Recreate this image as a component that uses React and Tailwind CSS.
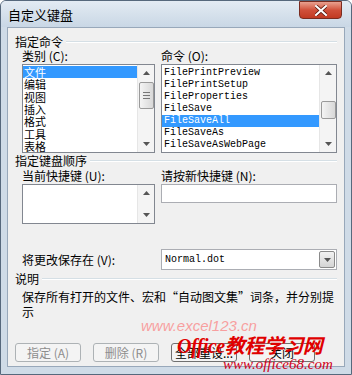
import React from "react";

const cjk = { fontFamily: '"Noto Sans CJK SC", "Noto Sans", sans-serif' };
const mono = { fontFamily: '"Liberation Mono", "Noto Sans CJK SC", monospace' };

function Arrow({ up }) {
  return (
    <svg width="7" height="4" viewBox="0 0 7 4">
      {up ? <path d="M0 4 L3.5 0 L7 4 Z" fill="#555" /> : <path d="M0 0 L3.5 4 L7 0 Z" fill="#555" />}
    </svg>
  );
}

function ScrollBar({ thumbTop, thumbH, showThumb = true }) {
  return (
    <div className="w-[17px] h-full bg-[#f4f4f4] border-l border-[#e6e6e6] flex flex-col items-center justify-between py-[6px] relative">
      <Arrow up />
      {showThumb && (
        <div
          className="absolute left-[1px] w-[15px] rounded-[2px] border border-[#9a9a9a] bg-gradient-to-r from-[#f4f4f4] to-[#d8d8d8] flex flex-col items-center justify-center gap-[2px]"
          style={{ top: thumbTop, height: thumbH }}
        >
          {thumbH < 25 ? null : (
            <>
              <div className="w-[7px] h-px bg-[#777]" />
              <div className="w-[7px] h-px bg-[#777]" />
              <div className="w-[7px] h-px bg-[#777]" />
            </>
          )}
        </div>
      )}
      <Arrow />
    </div>
  );
}

function GroupHeader({ text, mt }) {
  return (
    <div className={`flex items-center pl-[7px] pr-[7px] h-[12px] ${mt}`}>
      <span className="text-[12px] leading-[12px] text-black" style={cjk}>{text}</span>
      <div className="flex-1 ml-[3px] h-[2px] border-t border-[#d5dfe5] border-b border-b-white" />
    </div>
  );
}

export default function App() {
  const cats = ["文件", "编辑", "视图", "插入", "格式", "工具", "表格"];
  const cmds = ["FilePrintPreview", "FilePrintSetup", "FileProperties", "FileSave", "FileSaveAll", "FileSaveAs", "FileSaveAsWebPage"];
  return (
    <div className="w-[352px] h-[375px] relative overflow-hidden bg-[#cfdbe7] border border-[#56687c] rounded-t-[6px] flex flex-col" style={cjk}>
      {/* title bar */}
      <div className="h-[26px] flex items-center pl-[7px] pr-[10px] bg-gradient-to-b from-[#e3ebf3] to-[#c9d7e5] relative">
        <span className="text-[13px] text-black leading-none mt-[1px]">自定义键盘</span>
        <div className="absolute right-[9px] top-[0px] w-[43px] h-[18px] rounded-b-[4px] border border-[#7a2c20] bg-gradient-to-b from-[#e8a090] via-[#d0503a] to-[#c13a22] flex items-center justify-center">
          <svg width="12" height="11" viewBox="0 0 12 11">
            <path d="M1 1 L11 10 M11 1 L1 10" stroke="#5a1a10" strokeWidth="3.6" strokeLinecap="square" />
            <path d="M1 1 L11 10 M11 1 L1 10" stroke="#fff" strokeWidth="2" strokeLinecap="square" />
          </svg>
        </div>
      </div>
      {/* body */}
      <div className="flex-1 mx-[6px] mb-[7px] bg-[#f0f0f0] border border-[#98a8ba] flex flex-col">
        <GroupHeader text="指定命令" mt="mt-[8px]" />
        <div className="flex pl-[14px] pr-[6px] mt-[2px] gap-[6px]">
          <div className="w-[133px] flex flex-col">
            <div className="h-[12px] text-[12px] leading-[12px]">类别 (C):</div>
            <div className="mt-[2px] h-[89px] border border-[#828790] bg-white flex">
              <div className="flex-1 flex flex-col pt-[1px]">
                {cats.map((c, i) => (
                  <div key={c} className={`h-[12.3px] flex items-center text-[11px] leading-[12px] pl-[1px] ${i === 0 ? "bg-[#3399ff] text-white" : "text-black"}`}>{c}</div>
                ))}
              </div>
              <ScrollBar thumbTop={17} thumbH={27} />
            </div>
          </div>
          <div className="w-[176px] flex flex-col">
            <div className="h-[12px] text-[12px] leading-[12px]">命令 (O):</div>
            <div className="mt-[2px] h-[89px] border border-[#828790] bg-white flex">
              <div className="flex-1 flex flex-col pt-[2px]">
                {cmds.map((c, i) => (
                  <div key={c} className={`h-[12px] text-[10px] leading-[12px] pl-[2px] ${i === 4 ? "bg-[#3399ff] text-white" : "text-black"}`} style={mono}>{c}</div>
                ))}
              </div>
              <ScrollBar thumbTop={36} thumbH={18} />
            </div>
          </div>
        </div>
        <GroupHeader text="指定键盘顺序" mt="mt-[2px]" />
        <div className="flex pl-[14px] pr-[6px] mt-[3px] gap-[6px]">
          <div className="w-[133px] flex flex-col">
            <div className="h-[12px] text-[12px] leading-[12px]">当前快捷键 (U):</div>
            <div className="mt-[2px] h-[40px] border border-[#828790] bg-white flex justify-end">
              <ScrollBar showThumb={false} />
            </div>
          </div>
          <div className="w-[176px] flex flex-col">
            <div className="h-[12px] text-[12px] leading-[12px]">请按新快捷键 (N):</div>
            <div className="mt-[2px] h-[19px] border border-[#abadb3] bg-white" />
          </div>
        </div>
        <div className="flex items-center pl-[14px] pr-[6px] mt-[25px] gap-[6px]">
          <div className="w-[133px] text-[12px] leading-[12px]">将更改保存在 (V):</div>
          <div className="w-[176px] h-[21px] border border-[#abadb3] bg-white flex items-center">
            <span className="flex-1 pl-[3px] text-[10px]" style={mono}>Normal.dot</span>
            <div className="w-[16px] h-[17px] mr-[1px] border border-[#8a8a8a] rounded-[2px] bg-gradient-to-b from-[#f2f2f2] to-[#d4d4d4] flex items-center justify-center">
              <Arrow />
            </div>
          </div>
        </div>
        <GroupHeader text="说明" mt="mt-[3px]" />
        <div className="pl-[14px] pr-[8px] mt-[4px] text-[12px] leading-[15px] text-black">
          保存所有打开的文件、宏和“自动图文集”词条，并分别提<br />示
        </div>
        <div className="flex pl-[7px] mt-[24px] gap-[12px]">
          {["指定 (A)", "删除 (R)", "全部重设..."].map((b, i) => (
            <div key={b} className={`w-[66px] h-[19px] rounded-[3px] border ${i < 2 ? "border-[#adb2b5] text-[#8d8d8d]" : "border-[#707070] text-black"} bg-[#f4f4f4] text-[12px] leading-[17px] text-center`}>{b}</div>
          ))}
          <div className="w-[66px] h-[19px] rounded-[3px] border border-[#707070] bg-[#f4f4f4] text-[12px] leading-[17px] text-center">关闭</div>
        </div>
      </div>
      {/* watermark */}
      <div className="absolute left-[140px] top-[314px] text-[#ff5050] opacity-50 text-[15px] italic" style={{ fontFamily: '"Liberation Sans", sans-serif' }}>
        www.excel123.cn
      </div>
      <div className="absolute left-[176px] top-[330px] text-[#e00000] text-[20px] font-bold italic tracking-tight" style={{ fontFamily: '"Liberation Serif", "Noto Sans CJK SC", serif' }}>
        Office教程学习网
      </div>
      <div className="absolute left-[222px] top-[352px] text-[#d00020] text-[15px] italic" style={{ fontFamily: '"Liberation Serif", serif' }}>
        www.office68.com
      </div>
    </div>
  );
}
